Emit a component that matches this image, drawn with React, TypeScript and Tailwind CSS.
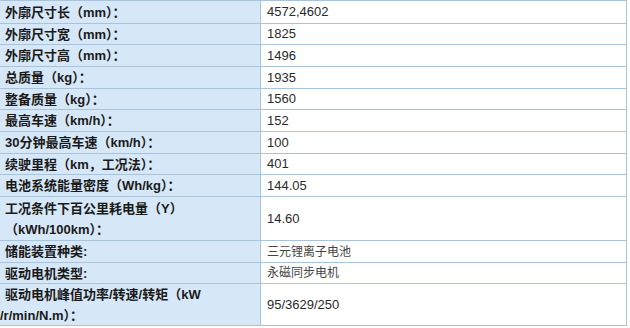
const font = { fontFamily: '"Liberation Sans", "Noto Sans CJK SC", sans-serif' };

type Row = {
  label: string[];
  value: string;
  h: string;
  cjk?: boolean;
};

const rows: Row[] = [
  { label: ["外廓尺寸长（mm）："], value: "4572,4602", h: "h-[23px]" },
  { label: ["外廓尺寸宽（mm）："], value: "1825", h: "h-[21px]" },
  { label: ["外廓尺寸高（mm）："], value: "1496", h: "h-[22px]" },
  { label: ["总质量（kg）："], value: "1935", h: "h-[22px]" },
  { label: ["整备质量（kg）："], value: "1560", h: "h-[21px]" },
  { label: ["最高车速（km/h）："], value: "152", h: "h-[22px]" },
  { label: ["30分钟最高车速（km/h）："], value: "100", h: "h-[22px]" },
  { label: ["续驶里程（km，工况法）："], value: "401", h: "h-[21px]" },
  { label: ["电池系统能量密度（Wh/kg）："], value: "144.05", h: "h-[22px]" },
  { label: ["工况条件下百公里耗电量（Y）", "（kWh/100km）："], value: "14.60", h: "h-[44px]" },
  { label: ["储能装置种类:"], value: "三元锂离子电池", h: "h-[22px]", cjk: true },
  { label: ["驱动电机类型:"], value: "永磁同步电机", h: "h-[21px]", cjk: true },
  { label: ["驱动电机峰值功率/转速/转矩（kW", "/r/min/N.m）："], value: "95/3629/250", h: "h-[42px]" },
];

export default function App() {
  return (
    <main className="w-[630px] h-[328px] bg-white overflow-hidden" style={font}>
      <div className="w-[627px] border-t border-r border-[#a9c3da]">
        {rows.map((row, i) => (
          <div key={i} className={`flex ${row.h} border-b border-[#a9c3da]`}>
            {/* LABEL */}
            <div className="w-[261px] shrink-0 bg-[#d6e7f7] border-r border-[#a9c3da] pl-[5px] flex flex-col justify-center text-[13px] font-bold text-[#1a1a1a]">
              {row.label.map((line, j) => (
                <div
                  key={j}
                  className={`leading-[21px] whitespace-nowrap ${
                    i === 12 && j === 1 ? "-ml-[5px]" : ""
                  }`}
                >
                  {line}
                </div>
              ))}
            </div>

            {/* VALUE */}
            <div
              className={`flex-1 pl-[6px] flex items-center text-[#2a2a2a] ${
                row.cjk ? "text-[12px] text-[#444]" : "text-[13px]"
              }`}
            >
              {row.value}
            </div>
          </div>
        ))}
      </div>
    </main>
  );
}
